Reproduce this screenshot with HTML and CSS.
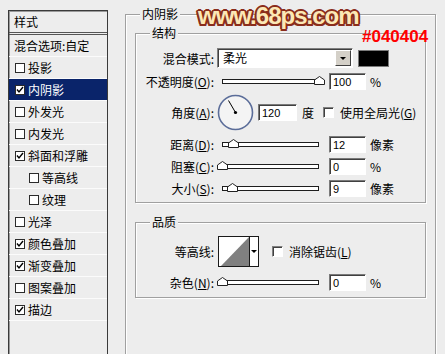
FILE: index.html
```html
<!DOCTYPE html>
<html lang="zh-CN">
<head>
    <meta charset="UTF-8">
    <title>图层样式 - 内阴影</title>
    <link rel="stylesheet" href="styles.css">
</head>
<body>
    <div class="dialog">
        <div class="styles-panel">
            <div class="panel-title">样式</div>
            <div class="style-row blend">混合选项:自定</div>
            <div class="style-row"><span class="check"></span>投影</div>
            <div class="style-row selected"><span class="check"><svg width="8" height="8"><polyline points="1,3.5 3,6 7,1" fill="none" stroke="#000" stroke-width="1.4"/></svg></span>内阴影</div>
            <div class="style-row"><span class="check"></span>外发光</div>
            <div class="style-row"><span class="check"></span>内发光</div>
            <div class="style-row"><span class="check"><svg width="8" height="8"><polyline points="1,3.5 3,6 7,1" fill="none" stroke="#000" stroke-width="1.4"/></svg></span>斜面和浮雕</div>
            <div class="style-row sub"><span class="check"></span>等高线</div>
            <div class="style-row sub"><span class="check"></span>纹理</div>
            <div class="style-row"><span class="check"></span>光泽</div>
            <div class="style-row"><span class="check"><svg width="8" height="8"><polyline points="1,3.5 3,6 7,1" fill="none" stroke="#000" stroke-width="1.4"/></svg></span>颜色叠加</div>
            <div class="style-row"><span class="check"><svg width="8" height="8"><polyline points="1,3.5 3,6 7,1" fill="none" stroke="#000" stroke-width="1.4"/></svg></span>渐变叠加</div>
            <div class="style-row"><span class="check"></span>图案叠加</div>
            <div class="style-row"><span class="check"><svg width="8" height="8"><polyline points="1,3.5 3,6 7,1" fill="none" stroke="#000" stroke-width="1.4"/></svg></span>描边</div>
        </div>

        <fieldset class="group outer">
            <legend>内阴影</legend>

            <fieldset class="group inner structure">
                <legend>结构</legend>
                <div class="rows">
                    <div class="row first">
                        <span class="row-label">混合模式:</span>
                        <div class="select">
                            <span class="select-value">柔光</span>
                            <span class="select-button"><span class="arrow"></span></span>
                        </div>
                        <span class="swatch"></span>
                    </div>
                    <div class="row">
                        <span class="row-label">不透明度(<u>O</u>):</span>
                        <div class="slider">
                            <div class="track"></div>
                            <svg class="thumb" style="left: 100%;" width="11" height="9"><polygon points="0.5,4 5.5,0.5 10.5,4 10.5,8.5 0.5,8.5" fill="#fff" stroke="#222"/></svg>
                        </div>
                        <span class="field">100</span>
                        <span class="unit">%</span>
                    </div>
                    <div class="row tall">
                        <span class="row-label">角度(<u>A</u>):</span>
                        <svg class="dial" width="37" height="37">
                            <circle cx="18.5" cy="18.5" r="17" fill="#f4f4f4" stroke="#5b6d99" stroke-width="1.6"/>
                            <line x1="18.5" y1="18.5" x2="11.5" y2="6.5" stroke="#000" stroke-width="1"/>
                            <circle cx="18.5" cy="18.5" r="1.6" fill="#000"/>
                        </svg>
                        <span class="field angle">120</span>
                        <span class="unit">度</span>
                        <span class="box"></span>
                        <span class="box-label">使用全局光(<u>G</u>)</span>
                    </div>
                    <div class="row">
                        <span class="row-label">距离(<u>D</u>):</span>
                        <div class="slider">
                            <div class="track"></div>
                            <svg class="thumb" style="left: 11%;" width="11" height="9"><polygon points="0.5,4 5.5,0.5 10.5,4 10.5,8.5 0.5,8.5" fill="#fff" stroke="#222"/></svg>
                        </div>
                        <span class="field">12</span>
                        <span class="unit">像素</span>
                    </div>
                    <div class="row">
                        <span class="row-label">阻塞(<u>C</u>):</span>
                        <div class="slider">
                            <div class="track"></div>
                            <svg class="thumb" style="left: 0%;" width="11" height="9"><polygon points="0.5,4 5.5,0.5 10.5,4 10.5,8.5 0.5,8.5" fill="#fff" stroke="#222"/></svg>
                        </div>
                        <span class="field">0</span>
                        <span class="unit">%</span>
                    </div>
                    <div class="row">
                        <span class="row-label">大小(<u>S</u>):</span>
                        <div class="slider">
                            <div class="track"></div>
                            <svg class="thumb" style="left: 10%;" width="11" height="9"><polygon points="0.5,4 5.5,0.5 10.5,4 10.5,8.5 0.5,8.5" fill="#fff" stroke="#222"/></svg>
                        </div>
                        <span class="field">9</span>
                        <span class="unit">像素</span>
                    </div>
                </div>
            </fieldset>

            <fieldset class="group inner quality">
                <legend>品质</legend>
                <div class="rows">
                    <div class="row contour-row">
                        <span class="row-label">等高线:</span>
                        <div class="contour">
                            <svg class="contour-preview" width="30" height="29">
                                <polygon points="2,29 30,0 30,29" fill="#808080"/>
                            </svg>
                            <span class="contour-button"><span class="arrow"></span></span>
                        </div>
                        <span class="box aa"></span>
                        <span class="box-label">消除锯齿(<u>L</u>)</span>
                    </div>
                    <div class="row">
                        <span class="row-label">杂色(<u>N</u>):</span>
                        <div class="slider">
                            <div class="track"></div>
                            <svg class="thumb" style="left: 0%;" width="11" height="9"><polygon points="0.5,4 5.5,0.5 10.5,4 10.5,8.5 0.5,8.5" fill="#fff" stroke="#222"/></svg>
                        </div>
                        <span class="field">0</span>
                        <span class="unit">%</span>
                    </div>
                </div>
            </fieldset>
        </fieldset>
    </div>

    <div class="watermark">www.68ps.com</div>
    <div class="hex">#040404</div>
</body>
</html>
```

FILE: styles.css
```css
body {
    margin: 0;
    background: #ededed;
    font-family: "Noto Sans CJK SC", "Liberation Sans", sans-serif;
    font-size: 12px;
    color: #000;
    height: 354px;
    overflow: hidden;
    position: relative;
}

.dialog {
    display: flex;
    align-items: flex-start;
    padding-left: 8px;
}

.styles-panel {
    width: 100px;
    height: 344px;
    margin-top: 10px;
    box-sizing: border-box;
    border: 1px solid #3a3a3a;
    border-bottom: 0;
    box-shadow: inset 1px 1px 0 #9a9a9a;
    flex-shrink: 0;
}

.panel-title {
    height: 21px;
    line-height: 21px;
    padding-left: 5px;
    border-bottom: 3px double #555;
}

.style-row {
    display: flex;
    align-items: center;
    height: 21px;
    line-height: 21px;
    padding-left: 6px;
    border-bottom: 1px solid #fbfbfb;
}

.style-row.blend {
    padding-left: 5px;
}

.style-row.sub {
    padding-left: 20px;
}

.style-row.selected {
    background: #0a246a;
    color: #fff;
}

.check {
    width: 10px;
    height: 10px;
    box-sizing: border-box;
    border: 1px solid #2b2b2b;
    background: #fff;
    margin-right: 3px;
    display: flex;
    align-items: center;
    justify-content: center;
}

.group {
    margin: 0;
    padding: 0;
    min-width: 0;
    box-sizing: border-box;
    border: 1px solid #a0a0a0;
    box-shadow: inset 1px 1px 0 #fff, 1px 1px 0 #fff;
}

.group legend {
    margin-left: 14px;
    padding: 0 2px;
    line-height: 14px;
    background: #ededed;
}

.outer {
    width: 311px;
    height: 347px;
    margin: 7px 0 0 17px;
    padding-top: 5px;
    border-bottom: 0;
}

.inner {
    width: 291px;
    margin-left: 9px;
}

.structure {
    padding: 8px 0 5px;
}

.quality {
    margin-top: 12px;
    padding: 7px 0 6px;
}

.rows {
    display: flex;
    flex-direction: column;
    gap: 4px;
}

.quality .rows {
    gap: 6px;
}

.row {
    display: flex;
    align-items: center;
    height: 18px;
}

.row.first {
    height: 20px;
}

.row.tall {
    height: 37px;
}

.row.contour-row {
    height: 31px;
}

.row-label {
    width: 78px;
    flex-shrink: 0;
    text-align: right;
}

.select {
    margin-left: 3px;
    width: 136px;
    height: 20px;
    box-sizing: border-box;
    display: flex;
    padding: 1px;
    border: 1px solid;
    border-color: #808080 #fff #fff #808080;
    box-shadow: inset 1px 1px 0 #404040;
    background: #fff;
}

.select-value {
    flex: 1;
    padding-left: 4px;
    line-height: 16px;
}

.select-button {
    width: 16px;
    box-sizing: border-box;
    background: #d4d0c8;
    border: 1px solid;
    border-color: #fff #404040 #404040 #fff;
    display: flex;
    align-items: center;
    justify-content: center;
}

.arrow {
    width: 0;
    height: 0;
    border-left: 3px solid transparent;
    border-right: 3px solid transparent;
    border-top: 3px solid #000;
}

.swatch {
    margin-left: 5px;
    width: 31px;
    height: 17px;
    box-sizing: border-box;
    background: #000;
    border: 1px solid #7a7a7a;
}

.slider {
    position: relative;
    margin-left: 8px;
    width: 97px;
    height: 18px;
    flex-shrink: 0;
    display: flex;
    align-items: center;
}

.track {
    flex: 1;
    height: 5px;
    margin-top: 1px;
    box-sizing: border-box;
    border: 1px solid #1e1e1e;
    background: #fff;
}

.thumb {
    position: absolute;
    top: 4px;
    margin-left: -5px;
}

.field {
    margin-left: 10px;
    width: 37px;
    height: 17px;
    box-sizing: border-box;
    padding: 1px 0 0 3px;
    border: 1px solid;
    border-color: #7a7a7a #fff #fff #7a7a7a;
    box-shadow: inset 1px 1px 0 #404040;
    background: #fff;
    font-family: "Liberation Sans", sans-serif;
    font-size: 11px;
    line-height: 14px;
}

.field.angle {
    margin-left: 4px;
    width: 39px;
}

.unit {
    margin-left: 4px;
}

.row.tall .unit {
    margin-left: 5px;
}

.dial {
    margin-left: 3px;
    flex-shrink: 0;
}

.box {
    margin-left: 9px;
    width: 11px;
    height: 11px;
    box-sizing: border-box;
    border: 1px solid;
    border-color: #808080 #fff #fff #808080;
    box-shadow: inset 1px 1px 0 #404040;
    background: #fff;
}

.box.aa {
    margin-left: 13px;
}

.box-label {
    margin-left: 6px;
}

.contour {
    margin-left: 4px;
    width: 41px;
    height: 31px;
    box-sizing: border-box;
    border: 1px solid #1a1a1a;
    background: #fff;
    display: flex;
}

.contour-button {
    flex: 1;
    border-left: 1px solid #1a1a1a;
    display: flex;
    align-items: center;
    justify-content: center;
}

.watermark {
    position: absolute;
    left: 198px;
    top: 2px;
    font-family: "Liberation Sans", sans-serif;
    font-weight: bold;
    font-size: 24px;
    letter-spacing: -1px;
    color: #fce8b6;
    text-shadow: 2px 0 0 #8a2d1c, -2px 0 0 #8a2d1c, 0 2px 0 #8a2d1c, 0 -2px 0 #8a2d1c,
        1.5px 1.5px 0 #8a2d1c, -1.5px 1.5px 0 #8a2d1c, 1.5px -1.5px 0 #8a2d1c, -1.5px -1.5px 0 #8a2d1c;
}

.hex {
    position: absolute;
    left: 362px;
    top: 27px;
    font-family: "Liberation Sans", sans-serif;
    font-weight: bold;
    font-size: 17px;
    color: #ff0000;
}
```
